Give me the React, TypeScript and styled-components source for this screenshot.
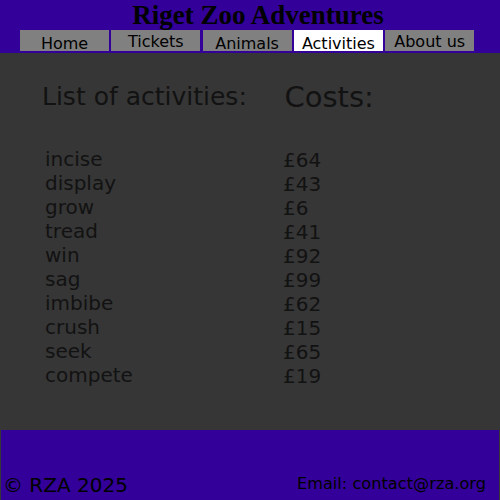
import React from "react";
import styled, { createGlobalStyle } from "styled-components";

const GlobalStyle = createGlobalStyle`
  html, body { margin: 0; padding: 0; height: 100%; }
  body { background: #363636; font-family: "DejaVu Sans", Verdana, sans-serif; }
  #root { height: 100%; }
`;

const Page = styled.div`
  display: flex;
  flex-direction: column;
  height: 500px;
  overflow: hidden;
`;

const Header = styled.header`
  background: #330099;
  padding-bottom: 2px;
`;

const Title = styled.h1`
  margin: 0;
  height: 30px;
  padding-left: 16px;
  font-family: "Liberation Serif", "Times New Roman", serif;
  font-weight: bold;
  font-size: 27px;
  line-height: 31px;
  text-align: center;
  color: #000;
`;

const Nav = styled.nav`
  display: flex;
  gap: 2.3px;
  padding-left: 20px;
`;

const NavButton = styled.a<{ $active?: boolean; $raised?: boolean }>`
  display: block;
  box-sizing: border-box;
  width: 89px;
  height: 21px;
  overflow: hidden;
  padding-top: ${(p) => (p.$raised ? "2px" : "3.5px")};
  background: ${(p) => (p.$active ? "#ffffff" : "#808080")};
  color: #000;
  font-size: 16px;
  text-align: center;
  text-decoration: none;
`;

const Main = styled.main`
  flex: 1;
  display: grid;
  grid-template-columns: 241px 1fr;
  align-content: start;
  padding: 0 0 0 42px;
  color: #121212;
`;

const Column = styled.section`
  display: flex;
  flex-direction: column;
`;

const Heading = styled.h2<{ $size: number; $top: number; $indent: number }>`
  margin: ${(p) => p.$top}px 0 0 ${(p) => p.$indent}px;
  font-size: ${(p) => p.$size}px;
  font-weight: normal;
  line-height: normal;
`;

const List = styled.ul<{ $top: number; $indent: number }>`
  list-style: none;
  margin: ${(p) => p.$top}px 0 0;
  padding: 0 0 0 ${(p) => p.$indent}px;
  font-size: 20px;
  line-height: 24px;
`;

const Footer = styled.footer`
  height: 70px;
  margin: 0 1px;
  background: #330099;
  display: flex;
  justify-content: space-between;
  align-items: flex-end;
  color: #000;
`;

const Copyright = styled.span`
  font-size: 20px;
  padding: 0 0 3.5px 2px;
`;

const Email = styled.span`
  font-size: 16.2px;
  padding: 0 13px 7px 0;
`;

const navItems = [
  { label: "Home" },
  { label: "Tickets", raised: true },
  { label: "Animals" },
  { label: "Activities", active: true },
  { label: "About us", raised: true },
];

const activities: [string, number][] = [
  ["incise", 64],
  ["display", 43],
  ["grow", 6],
  ["tread", 41],
  ["win", 92],
  ["sag", 99],
  ["imbibe", 62],
  ["crush", 15],
  ["seek", 65],
  ["compete", 19],
];

export default function App() {
  return (
    <>
      <GlobalStyle />
      <Page>
        <Header>
          <Title>Riget Zoo Adventures</Title>
          <Nav>
            {navItems.map((n) => (
              <NavButton key={n.label} href="#" $active={n.active} $raised={n.raised}>
                {n.label}
              </NavButton>
            ))}
          </Nav>
        </Header>
        <Main>
          <Column>
            <Heading $size={25} $top={29} $indent={0}>List of activities:</Heading>
            <List $top={36} $indent={3}>
              {activities.map(([a]) => (
                <li key={a}>{a}</li>
              ))}
            </List>
          </Column>
          <Column>
            <Heading $size={29} $top={27} $indent={1.5}>Costs:</Heading>
            <List $top={34} $indent={0}>
              {activities.map(([a, c]) => (
                <li key={a}>£{c}</li>
              ))}
            </List>
          </Column>
        </Main>
        <Footer>
          <Copyright>© RZA 2025</Copyright>
          <Email>Email: contact@rza.org</Email>
        </Footer>
      </Page>
    </>
  );
}
